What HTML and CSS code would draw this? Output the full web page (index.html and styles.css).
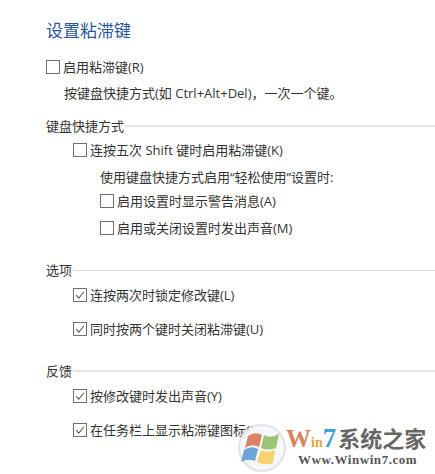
FILE: index.html
```html
<!DOCTYPE html>
<html lang="zh-CN">
<head>
<meta charset="utf-8">
<title>设置粘滞键</title>
<link rel="stylesheet" href="styles.css">
</head>
<body>
<main class="page">
  <h1 class="title">设置粘滞键</h1>
  <div class="row r-enable"><span class="box"></span><span>启用粘滞键(R)</span></div>
  <p class="text desc">按键盘快捷方式(如 Ctrl+Alt+Del)，一次一个键。</p>

  <div class="section s-keys"><span>键盘快捷方式</span><i class="rule thick"></i></div>
  <div class="row indent r-five"><span class="box"></span><span>连按五次 Shift 键时启用粘滞键(K)</span></div>
  <p class="text sub">使用键盘快捷方式启用“轻松使用”设置时:</p>
  <div class="row sub r-warn"><span class="box"></span><span>启用设置时显示警告消息(A)</span></div>
  <div class="row sub r-sound"><span class="box"></span><span>启用或关闭设置时发出声音(M)</span></div>

  <div class="section s-opts"><span>选项</span><i class="rule"></i></div>
  <div class="row indent r-lock"><span class="box"><svg viewBox="0 0 14 14"><path d="M2.6 7.2 5.6 10.6 11.6 3.2"/></svg></span><span>连按两次时锁定修改键(L)</span></div>
  <div class="row indent r-gap"><span class="box"><svg viewBox="0 0 14 14"><path d="M2.6 7.2 5.6 10.6 11.6 3.2"/></svg></span><span>同时按两个键时关闭粘滞键(U)</span></div>

  <div class="section s-feed"><span>反馈</span><i class="rule thick"></i></div>
  <div class="row indent r-lock"><span class="box"><svg viewBox="0 0 14 14"><path d="M2.6 7.2 5.6 10.6 11.6 3.2"/></svg></span><span>按修改键时发出声音(Y)</span></div>
  <div class="row indent r-gap"><span class="box"><svg viewBox="0 0 14 14"><path d="M2.6 7.2 5.6 10.6 11.6 3.2"/></svg></span><span>在任务栏上显示粘滞键图标(I)</span></div>
</main>

<aside class="mark">
  <svg class="orb" viewBox="0 0 50 48">
    <circle cx="25" cy="24" r="23" fill="#f5f7f8" stroke="#dfe3e5" stroke-width="2"/>
    <path d="M11 12Q18 7 25 11L22 23Q15 19 8 24Z" fill="#dd8064"/>
    <path d="M27 11Q34 15 42 10L39 24Q32 27 24 24Z" fill="#9cc376"/>
    <path d="M7 26Q14 21 21 25L18 37Q11 34 4 38Z" fill="#6ea6d8"/>
    <path d="M24 26Q31 29 38 26L36 39Q28 42 20 38Z" fill="#f4d272"/>
  </svg>
  <div class="brand"><b class="w">W</b><b class="i">in</b><b class="seven">7</b><b class="cn">系统之家</b></div>
  <div class="url">Www.Winwin7.com</div>
</aside>
</body>
</html>
```

FILE: styles.css
```css
* { box-sizing: border-box; }
html, body { margin: 0; height: 100%; }
body {
  width: 435px;
  height: 474px;
  overflow: hidden;
  position: relative;
  background: #fff;
  color: #333;
  font: 13px/18px "Open Sans", "Noto Sans CJK SC", sans-serif;
}
.page { padding: 20px 0 0 46px; }
.title {
  margin: 0;
  height: 22px;
  font-size: 17px;
  line-height: 22px;
  font-weight: 400;
  color: #2b579a;
}
.row { display: flex; align-items: center; gap: 3px; height: 18px; }
.text { margin: 0; height: 18px; }
.box {
  flex: none;
  width: 14px;
  height: 14px;
  border: 1px solid #6f6f6f;
  background: #fff;
}
.box svg { display: block; width: 12px; height: 12px; }
.box path { fill: none; stroke: #555; stroke-width: 1.2; }
.r-enable { margin-top: 16px; }
.desc { margin: 8px 0 0 18px; }
.section { display: flex; align-items: center; gap: 1px; height: 18px; }
.rule { flex: 1; height: 1px; background: #dcdcdc; }
.rule.thick { height: 2px; background: #e4e4e4; }
.s-keys { margin-top: 15px; }
.indent { margin-left: 27px; }
.sub { margin-left: 54px; }
.r-five { margin-top: 6px; }
p.sub { margin-top: 9px; }
.r-warn { margin-top: 6px; }
.r-sound { margin-top: 9px; }
.s-opts { margin-top: 24px; }
.r-lock { margin-top: 7px; }
.r-gap { margin-top: 16px; }
.s-feed { margin-top: 24px; }

.mark {
  position: absolute;
  left: 237px;
  top: 424px;
  width: 198px;
  height: 50px;
}
.orb { position: absolute; left: 0; top: 0; width: 50px; height: 48px; }
.brand {
  position: absolute;
  left: 49px;
  top: 1px;
  font: 700 20px/24px "Liberation Serif", "Noto Sans CJK SC", serif;
  white-space: nowrap;
}
.brand b { font-weight: 700; }
.w { color: #d9835a; font-size: 25px; }
.i { color: #e0a93a; font-size: 14px; }
.seven { color: #3f9fd6; font-size: 27px; }
.cn { color: #666; font: 700 22px/24px "Noto Sans CJK SC", sans-serif; margin-left: 2px; }
.url {
  position: absolute;
  left: 61px;
  top: 28px;
  font: 700 13px/16px "Liberation Serif", serif;
  color: #555;
  letter-spacing: .55px;
  white-space: nowrap;
}
```
